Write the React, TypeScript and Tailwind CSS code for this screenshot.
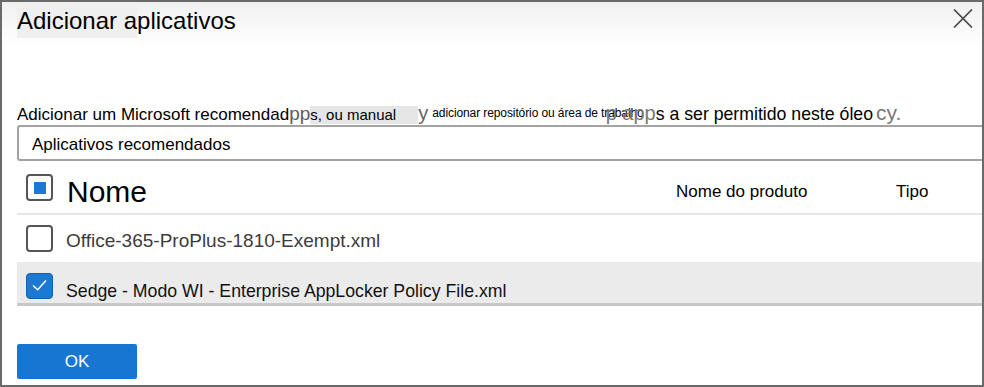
import React from 'react';

type Row = {
  name: string;
  checked: boolean;
};

const rows: Row[] = [
  { name: "Office-365-ProPlus-1810-Exempt.xml", checked: false },
  { name: "Sedge - Modo WI - Enterprise AppLocker Policy File.xml", checked: true },
];

const CloseIcon = () => (
  <svg width="20" height="19" viewBox="0 0 20 19" className="mt-[7px] mr-[9px]">
    <path d="M1 0.5 L19 18.5 M19 0.5 L1 18.5" stroke="#4a4a4a" strokeWidth="1.7" fill="none" />
  </svg>
);

const Checkbox = ({ state }: { state: 'empty' | 'partial' | 'checked' }) => {
  if (state === 'checked') {
    return (
      <div className="w-[27px] h-[26px] rounded-[4px] bg-[#1b79d3] border border-[#0f62ae] flex items-center justify-center">
        <svg width="27" height="26" viewBox="0 0 27 26">
          <path d="M6.5 12.5 L11.5 17 L20.5 7" stroke="#ffffff" strokeWidth="1.6" fill="none" />
        </svg>
      </div>
    );
  }
  return (
    <div className="w-[27px] h-[27px] rounded-[4px] border-2 border-[#555] bg-white flex items-center justify-center">
      {state === 'partial' && <div className="w-[12px] h-[12px] bg-[#1b79d3]" />}
    </div>
  );
};

const App = () => {
  return (
    <div className="w-[984px] h-[387px] border-2 border-[#6a6a6a] bg-white overflow-hidden flex flex-col font-['Liberation_Sans',Arial,sans-serif] text-black">
      {/* header */}
      <div className="h-[43px] flex justify-between items-start bg-linear-to-b from-[#f0f0f0] to-white">
        <h1 className="ml-[15px] mt-[5px] text-[24px] leading-[28px] font-normal whitespace-nowrap">
          <span className="bg-[#efefef] pb-[4px]">Adicionar a</span>plicativos
        </h1>
        <CloseIcon />
      </div>

      {/* description */}
      <div className="mt-[56px] ml-[15px] h-[24px] text-[17px] leading-[24px] whitespace-nowrap">
        <span>Adicionar um Microsoft recomendad</span>
        <span className="text-[19px] text-[#5c5c5c]">pp</span>
        <span className="inline-block w-[108px] h-[18px] leading-[18px] bg-[#e6e6e6] text-[15px]">s, ou manual</span>
        <span className="text-[20px] text-[#666]">y</span>
        <span className="ml-[4px] text-[12px] tracking-[-0.1px] align-[3px]">adicionar repositório ou área de trabalho</span>
        <span className="-ml-[38px] text-[20px] text-[#777]">p app</span>
        <span className="text-[17.7px]">s a ser permitido neste óleo</span>
        <span className="ml-[3px] text-[21px] text-[#777]">cy.</span>
      </div>

      {/* select */}
      <div className="ml-[15px] w-[975px] h-[36px] shrink-0 border-2 border-[#a3a3a3] rounded-[3px] pl-[13px] pt-[8px] text-[17px] leading-[20px] whitespace-nowrap">
        Aplicativos recomendados
      </div>

      {/* table header */}
      <div className="ml-[15px] h-[52px] shrink-0 flex items-start whitespace-nowrap">
        <div className="w-[50px] pl-[9px] mt-[13px]">
          <Checkbox state="partial" />
        </div>
        <div className="w-[609px] mt-[14px] text-[30px] leading-[34px]">Nome</div>
        <div className="w-[220px] mt-[21px] text-[17px] leading-[20px]">Nome do produto</div>
        <div className="mt-[21px] text-[17px] leading-[20px]">Tipo</div>
      </div>
      <div className="ml-[15px] h-[2px] shrink-0 bg-[#e6e6e6]" />

      {/* rows */}
      {rows.map((row) =>
        row.checked ? (
          <div key={row.name} className="ml-[15px] h-[44px] shrink-0 flex items-start bg-[#ebebeb] border-b-[3px] border-[#c8c8c8] whitespace-nowrap">
            <div className="w-[49px] pl-[9px] mt-[11px]">
              <Checkbox state="checked" />
            </div>
            <div className="mt-[18px] text-[17.7px] leading-[22px] text-[#111]">{row.name}</div>
          </div>
        ) : (
          <div key={row.name} className="ml-[15px] h-[47px] shrink-0 flex items-start whitespace-nowrap">
            <div className="w-[49px] pl-[9px] mt-[10px]">
              <Checkbox state="empty" />
            </div>
            <div className="mt-[15px] text-[19px] leading-[22px] text-[#3c3c3c]">{row.name}</div>
          </div>
        )
      )}

      {/* footer */}
      <div className="ml-[15px] mt-[38px]">
        <button className="w-[120px] h-[35px] rounded-[2px] bg-[#1676d2] text-white text-[17px] leading-[20px]">
          OK
        </button>
      </div>
    </div>
  );
};

export default App;
